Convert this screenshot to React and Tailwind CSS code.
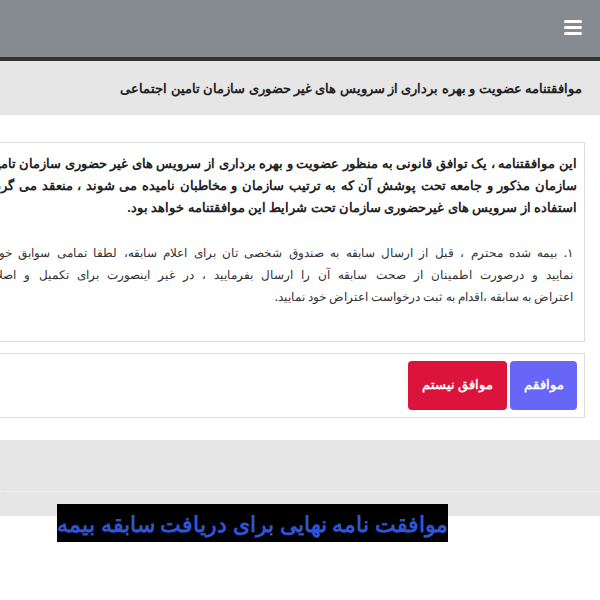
import React from 'react';

const font = { fontFamily: '"Noto Sans", sans-serif' };

// each line is justified the way the source paragraph is (last line left natural)
const introLines = [
    'این موافقتنامه ، یک توافق قانونی به منظور عضویت و بهره برداری از سرویس های غیر حضوری سازمان تامین اجتماعی',
    'سازمان مذکور و جامعه تحت پوشش آن که به ترتیب سازمان و مخاطبان نامیده می شوند ، منعقد می گردد و هرگونه',
    'استفاده از سرویس های غیرحضوری سازمان تحت شرایط این موافقتنامه خواهد بود.',
];

const ruleLines = [
    '۱. بیمه شده محترم ، قبل از ارسال سابقه به صندوق شخصی تان برای اعلام سابقه، لطفا تمامی سوابق خود را بررسی',
    'نمایید و درصورت اطمینان از صحت سابقه آن را ارسال بفرمایید ، در غیر اینصورت برای تکمیل و اصلاح سابقه یا',
    'اعتراض به سابقه ،اقدام به ثبت درخواست اعتراض خود نمایید.',
];

const Lines = ({ lines }) =>
    lines.map((line, i) =>
        i < lines.length - 1 ? (
            <div key={i} className="flex justify-between whitespace-nowrap">
                {line.split(' ').map((w, j) => (
                    <span key={j}>{w}</span>
                ))}
            </div>
        ) : (
            <div key={i} className="whitespace-nowrap">{line}</div>
        )
    );

export default function App() {
    return (
        <div dir="rtl" className="relative w-[600px] h-[600px] overflow-hidden bg-white text-[#222]" style={font}>
            {/* Navbar */}
            <div className="h-[61px] bg-[#868b92] border-b-4 border-[#333] flex items-start pr-[18px] pt-[20px]">
                <div className="flex flex-col gap-[3px]">
                    <span className="block w-[18px] h-[3px] bg-white rounded-sm" />
                    <span className="block w-[18px] h-[3px] bg-white rounded-sm" />
                    <span className="block w-[18px] h-[3px] bg-white rounded-sm" />
                </div>
            </div>

            {/* Page title */}
            <div className="h-[54px] bg-[#e6e6e6] flex items-center pr-[18px] pt-[2px]">
                <h1 className="text-[13px] font-bold whitespace-nowrap">
                    موافقتنامه عضویت و بهره برداری از سرویس های غیر حضوری سازمان تامین اجتماعی
                </h1>
            </div>

            {/* Content */}
            <div className="h-[325px] pt-[27px] pr-[15px]">
                <div className="w-[650px] h-[200px] border border-[#dcdcdc] bg-white pt-[9px] pr-[7px]">
                    <div className="text-[13px] font-bold leading-[22px]">
                        <Lines lines={introLines} />
                    </div>
                    <div className="mt-[24px] pr-[4px] text-[12px] leading-[22px] text-[#333]">
                        <Lines lines={ruleLines} />
                    </div>
                </div>

                <div className="mt-[11px] w-[650px] h-[65px] border border-[#dcdcdc] bg-white flex items-center gap-[3px] pr-[7px]">
                    <button className="w-[67px] h-[49px] rounded-[4px] bg-[#6866f7] text-white text-[12.5px] font-bold">
                        موافقم
                    </button>
                    <button className="w-[99px] h-[49px] rounded-[4px] bg-[#dc143c] text-white text-[12.5px] font-bold">
                        موافق نیستم
                    </button>
                </div>
            </div>

            {/* Footer */}
            <div className="h-[76px] bg-[#e6e6e6] pt-[51px]">
                <div className="border-t border-dotted border-[#f4f4f4]" />
            </div>

            {/* Caption overlay */}
            <div className="absolute left-[57px] top-[504px] w-[391px] h-[38px] bg-black flex items-center justify-center overflow-hidden">
                <span className="text-[#2d55d6] text-[22px] font-black whitespace-nowrap leading-none">
                    موافقت نامه نهایی برای دریافت سابقه بیمه
                </span>
            </div>
        </div>
    );
}
